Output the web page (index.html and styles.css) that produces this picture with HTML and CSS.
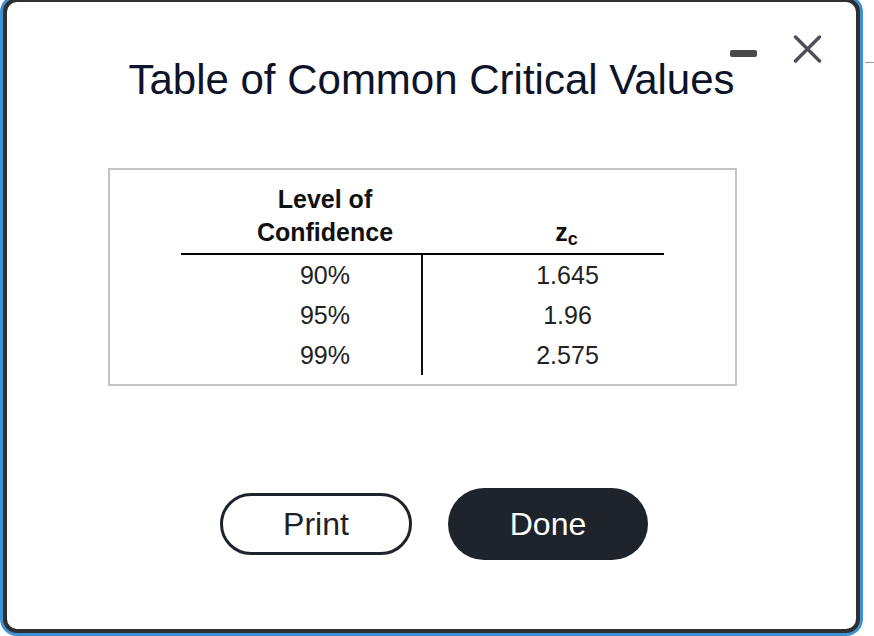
FILE: index.html
```html
<!DOCTYPE html>
<html lang="en">
<head>
<meta charset="utf-8">
<title>Table of Common Critical Values</title>
<link rel="stylesheet" href="styles.css">
</head>
<body>
<div class="edge-tick"></div>
<div class="dialog" role="dialog" aria-label="Table of Common Critical Values">
  <span class="minimize" aria-label="Minimize"></span>
  <svg class="close" width="29" height="28" viewBox="0 0 29 28" aria-label="Close">
    <path d="M2.5 2 L26.5 26 M26.5 2 L2.5 26" stroke="#4b5058" stroke-width="3.4" stroke-linecap="round" fill="none"/>
  </svg>
  <h1 class="title">Table of Common Critical Values</h1>
  <div class="table-box">
    <table class="crit">
      <thead>
        <tr>
          <th class="col-a">Level of<br>Confidence</th>
          <th class="col-b">z<sub>c</sub></th>
        </tr>
      </thead>
      <tbody>
        <tr><td class="col-a">90%</td><td class="col-b">1.645</td></tr>
        <tr><td class="col-a">95%</td><td class="col-b">1.96</td></tr>
        <tr><td class="col-a">99%</td><td class="col-b">2.575</td></tr>
      </tbody>
    </table>
  </div>
  <div class="actions">
    <button class="btn btn-outline">Print</button>
    <button class="btn btn-solid">Done</button>
  </div>
</div>
</body>
</html>
```

FILE: styles.css
```css
html, body {
  margin: 0;
  padding: 0;
  background: #ffffff;
  overflow: hidden;
  height: 636px;
}

body {
  position: relative;
  font-family: "Liberation Sans", Arial, Helvetica, sans-serif;
}

.edge-tick {
  position: absolute;
  left: 865px;
  top: 62px;
  width: 9px;
  height: 1px;
  background: #9a9a9a;
}

.dialog {
  position: relative;
  box-sizing: border-box;
  width: 857px;
  height: 635px;
  margin: -2px 0 0 3px;
  border: 4px solid #2f2f2f;
  border-radius: 14px;
  box-shadow: 0 0 0 3px #3f90d4;
  background: #ffffff;
  padding-top: 54px;
}

.minimize {
  position: absolute;
  left: 723px;
  top: 48px;
  width: 27px;
  height: 7px;
  border-radius: 2px;
  background: #4a4a4a;
}

.close {
  position: absolute;
  left: 786px;
  top: 33px;
}

.title {
  margin: 0;
  text-align: center;
  font-weight: normal;
  font-size: 42px;
  line-height: 48px;
  color: #0d1429;
}

.table-box {
  box-sizing: border-box;
  width: 629px;
  margin: 64px 0 0 101px;
  border: 2px solid #c4c4c4;
  padding: 13px 71px 9px;
}

.crit {
  width: 483px;
  border-collapse: separate;
  border-spacing: 0;
  table-layout: fixed;
  color: #222222;
}

.crit .col-a {
  width: 240px;
}

.crit th,
.crit td {
  box-sizing: border-box;
  padding: 0 0 0 48px;
  text-align: center;
}

.crit th {
  font-weight: bold;
  font-size: 25px;
  line-height: 33px;
  padding-bottom: 4px;
  vertical-align: bottom;
  border-bottom: 2px solid #000000;
  color: #111111;
}

.crit th sub {
  font-size: 18px;
  line-height: 0;
  vertical-align: -4px;
}

.crit td {
  font-size: 25px;
  height: 40px;
  line-height: 40px;
}

.crit td.col-b {
  border-left: 2px solid #111111;
}

.actions {
  display: flex;
  justify-content: center;
  align-items: center;
  gap: 36px;
  margin-top: 102px;
  padding-left: 5px;
}

.btn {
  box-sizing: border-box;
  font-family: "Liberation Sans", Arial, Helvetica, sans-serif;
  font-size: 32px;
  cursor: pointer;
  padding: 0;
}

.btn-outline {
  width: 192px;
  height: 62px;
  border: 3px solid #1e222b;
  border-radius: 31px;
  background: #ffffff;
  color: #1d2129;
}

.btn-solid {
  width: 200px;
  height: 72px;
  border: none;
  border-radius: 36px;
  background: #1f232b;
  color: #ffffff;
}
```
